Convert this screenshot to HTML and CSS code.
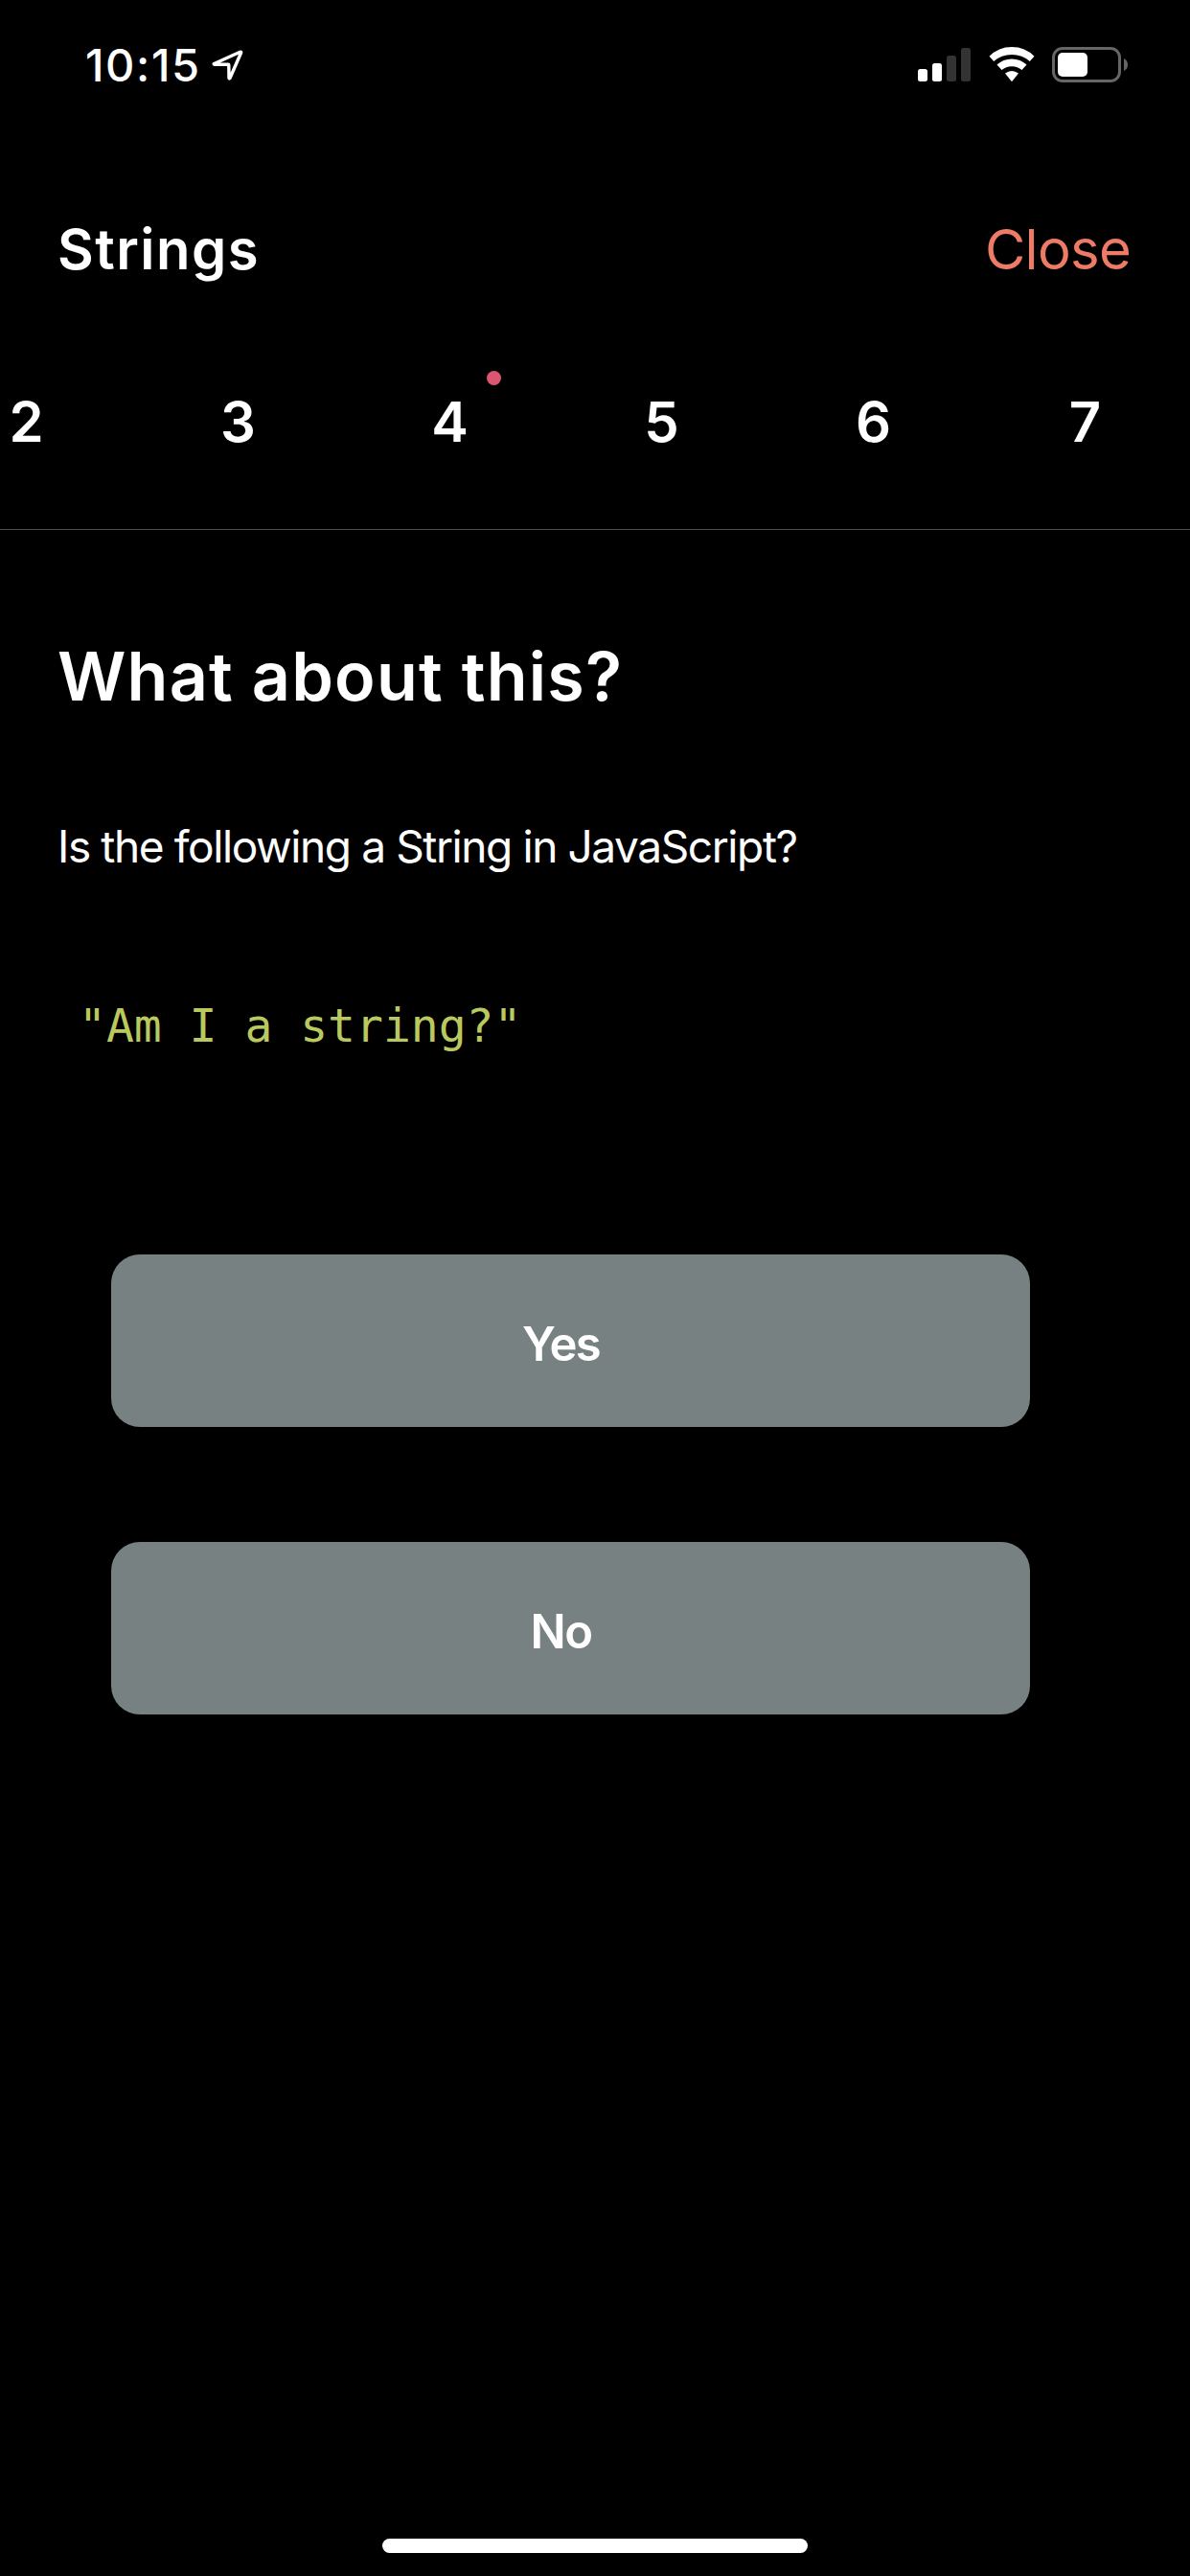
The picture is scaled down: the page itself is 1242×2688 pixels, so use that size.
FILE: index.html
```html
<!DOCTYPE html>
<html lang="en">
<head>
<meta charset="utf-8">
<title>Strings</title>
<link rel="stylesheet" href="styles.css">
</head>
<body>
<div class="statusbar">
  <div class="clock"><span class="time">10:15</span>
    <svg class="location" width="34" height="34" viewBox="0 0 34 34"><path d="M2.500 15.500L29.500 3.300Q31 2.800 30.500 4.300L19 30.500Q18.200 31.500 18 30.200L17.800 16.800Q17.800 16.300 17.300 16.300L3 16.300Q1.800 16 2.500 15.500Z" fill="none" stroke="#fff" stroke-width="3.400" stroke-linejoin="round"/></svg>
  </div>
  <div class="indicators">
    <svg width="55" height="37" viewBox="0 0 55 37"><rect y="23" width="10" height="13" rx="2.500" fill="#fff"/><rect x="15" y="17" width="10" height="19" rx="2.500" fill="#fff"/><rect x="30" y="9" width="10" height="27" rx="2.500" fill="#333"/><rect x="45" y="1" width="10" height="35" rx="2.500" fill="#333"/></svg>
    <svg class="wifi" width="48" height="37" viewBox="0 0 48 37"><path d="M0.500 9.800Q10 0 24 0T47.500 9.800L42.800 15Q35 8 24 8T5.200 15Z" fill="#fff"/><path d="M8.500 18.500Q15 12.500 24 12.500T39.500 18.500L34.500 24Q30 20.200 24 20.200T13.500 24Z" fill="#fff"/><path d="M17 27.500Q24 22.500 31 27.500L24.600 35.600Q24 36.200 23.400 35.600Z" fill="#fff"/></svg>
    <svg class="battery" width="80" height="37" viewBox="0 0 80 37"><rect x="1.500" y="1.500" width="69" height="34" rx="9.500" fill="none" stroke="#666" stroke-width="3"/><rect x="6" y="6" width="31" height="25" rx="5" fill="#fff"/><path d="M75 12Q79 14 79 18.500T75 25Z" fill="#666"/></svg>
  </div>
</div>
<header class="header"><h1 class="title">Strings</h1><a class="close">Close</a></header>
<nav class="steps"><span class="step">2</span><span class="step">3</span><span class="step current">4</span><span class="step">5</span><span class="step">6</span><span class="step">7</span></nav>
<main class="content">
  <h2 class="heading">What about this?</h2>
  <p class="question">Is the following a String in JavaScript?</p>
  <code class="code">"Am I a string?"</code>
  <div class="answers"><button class="answer">Yes</button><button class="answer">No</button></div>
</main>
<div class="home"></div>
</body>
</html>
```
FILE: styles.css
```css
* { box-sizing: border-box; }
body { margin: 0; width: 1242px; height: 2688px; background: #000; color: #fff; font-family: Inter, sans-serif; display: flex; flex-direction: column; overflow: hidden; }
.statusbar { height: 135px; padding: 0 64px 0 89px; display: flex; justify-content: space-between; align-items: center; }
.clock { display: flex; align-items: center; gap: 11px; }
.time { font-size: 47px; font-weight: 500; line-height: 60px; letter-spacing: 1.6px; }
.indicators { display: flex; align-items: center; }
.wifi { margin-left: 19px; }
.battery { margin-left: 18px; }
.header { height: 250px; padding: 0 62px 0 60px; display: flex; justify-content: space-between; align-items: center; }
.title { margin: 0; font-size: 58px; font-weight: 600; line-height: 70px; letter-spacing: 1.5px; }
.close { font-size: 58px; line-height: 70px; color: #ee7b65; letter-spacing: -0.7px; }
.steps { height: 168px; padding-top: 20px; display: flex; border-bottom: 1px solid #4a524f; margin-left: -83px; }
.step { width: 221px; text-align: center; font-size: 58px; font-weight: 600; line-height: 70px; flex: none; position: relative; }
.current::after { content: ""; position: absolute; left: 149px; top: -18px; width: 15px; height: 15px; border-radius: 50%; background: #dc5671; }
.content { flex: 1; padding: 108px 60px 0; }
.heading { margin: 0; font-size: 70px; font-weight: 600; line-height: 90px; letter-spacing: 1.2px; }
.question { margin: 102px 0 0; font-size: 46px; line-height: 60px; letter-spacing: -1.4px; }
.code { display: block; margin: 127px 0 0 22px; font: 48px/60px "DejaVu Sans Mono", monospace; color: #bac95f; }
.answers { margin: 209px 0 0 56px; width: 959px; display: flex; flex-direction: column; gap: 120px; }
.answer { height: 180px; border: 0; border-radius: 30px; padding: 8px 20px 0 0; background: #788181; color: #fff; font: 600 49px/60px Inter, sans-serif; letter-spacing: -1.6px; }
.home { width: 444px; height: 15px; border-radius: 8px; background: #fff; margin: 0 auto 24px; }
```
